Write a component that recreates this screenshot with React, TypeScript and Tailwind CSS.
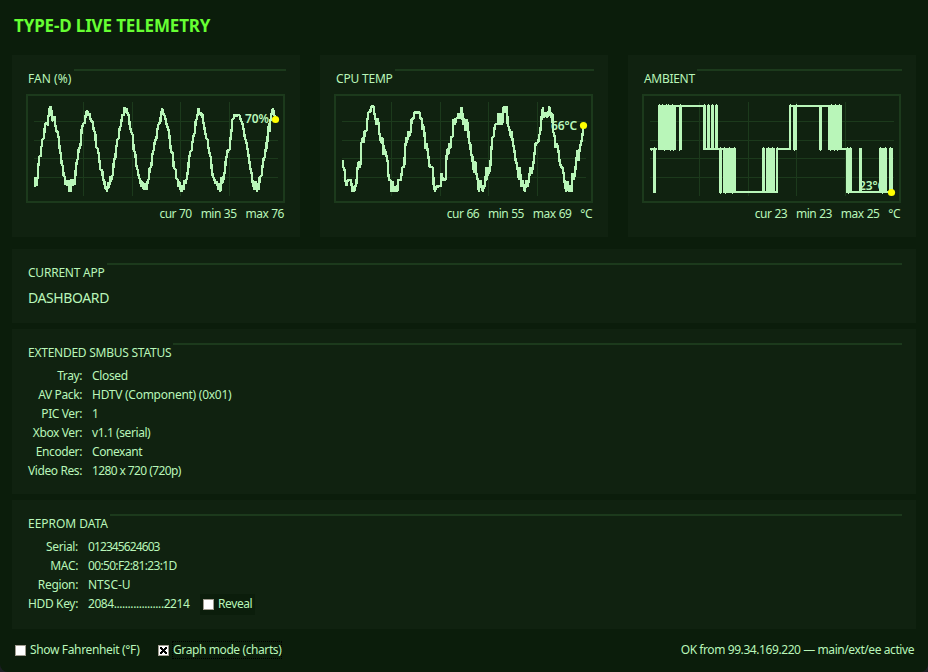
import type { ReactNode } from "react";

const LINE = "#b9f6b9";

const fanTrace =
  "44,292 44,264 48,264 48,288 50,270 54,260 54,230 57,200 62,198 62,172 66,165 66,148 70,145 72,130 74,104 79,98 83,108 84,78 88,76 88,54 92,50 94,70 96,94 102,78 104,100 108,122 112,126 116,150 118,175 122,195 124,222 128,228 130,258 134,260 134,285 138,270 142,288 146,270 148,305 150,285 152,305 154,268 158,286 162,268 164,284 166,240 170,210 173,206 175,178 180,170 182,150 184,118 188,102 194,98 197,64 202,64 204,78 208,70 212,94 216,92 220,118 225,130 227,170 233,176 237,208 240,238 246,242 248,268 252,272 254,295 258,290 260,305 264,275 266,295 270,258 272,275 277,255 279,235 281,208 285,205 287,180 291,150 295,145 298,115 302,105 306,72 310,78 312,52 316,68 320,55 322,72 326,76 328,105 332,125 338,135 340,180 345,190 348,225 352,240 356,262 360,268 362,290 366,275 368,298 372,280 376,298 379,298 382,275 386,265 388,235 393,230 396,195 400,180 404,150 408,148 411,120 416,98 420,98 422,70 426,56 430,75 434,78 438,100 442,112 446,125 450,165 452,185 458,190 460,230 466,240 468,265 472,270 474,290 478,275 480,298 484,305 486,285 490,300 492,270 496,282 500,262 504,235 506,205 510,185 514,180 516,160 520,135 524,128 526,95 530,85 532,72 535,55 538,75 542,68 546,72 548,90 552,110 554,125 558,145 562,148 564,170 568,190 572,205 574,235 578,262 582,265 584,280 590,275 594,298 598,280 600,305 604,262 608,280 611,250 614,248 616,215 620,195 622,182 628,178 630,150 634,120 636,90 640,85 642,72 646,78 652,76 658,76 662,92 666,98 670,118 674,145 678,155 682,180 686,205 690,235 694,250 698,285 702,298 706,275 710,305 714,280 716,300 718,262 724,255 726,235 730,205 734,200 738,155 740,178 742,140 746,100 748,125 750,95 754,70 758,55 762,75 766,88";

const cpuTrace =
  "40,214 45,214 45,232 49,240 51,270 55,288 58,270 68,270 70,288 72,305 76,290 78,305 80,288 84,286 86,250 88,232 92,214 95,232 98,214 99,160 104,142 107,160 109,124 115,122 117,92 120,68 126,66 128,50 136,50 138,68 141,86 145,104 148,86 152,106 152,124 156,142 158,160 162,142 165,160 166,195 170,178 174,196 178,214 180,250 182,270 188,272 188,305 193,272 195,305 198,288 201,305 205,290 207,305 209,270 218,270 220,250 222,232 228,230 230,178 234,142 236,160 240,124 242,140 248,122 250,86 256,86 258,68 274,68 276,86 280,86 282,120 284,104 288,124 292,178 295,160 300,196 304,230 314,232 316,285 320,305 324,290 338,288 340,250 344,270 352,268 354,214 356,178 360,195 362,160 366,178 368,142 373,140 376,86 380,105 384,86 390,84 390,68 394,86 398,68 400,50 402,68 404,104 408,86 412,122 416,86 420,122 422,158 426,160 428,195 432,196 434,232 438,248 441,214 444,250 448,268 450,290 452,305 456,270 460,290 464,305 466,290 470,288 474,232 476,270 480,232 482,250 486,230 488,196 492,142 496,140 500,104 508,102 510,68 514,104 518,68 522,104 524,50 528,68 532,50 536,52 538,100 544,122 548,142 550,124 554,160 558,180 562,212 564,214 568,240 572,270 574,232 578,268 580,290 584,270 586,290 590,305 594,270 598,290 602,268 606,232 610,250 614,232 618,195 622,160 630,156 632,140 636,124 640,80 644,50 646,84 652,68 656,84 660,68 664,50 668,84 672,68 674,122 680,142 682,174 686,160 690,178 694,214 698,232 702,230 706,250 710,285 714,305 718,272 722,305 726,285 730,305 732,250 736,270 740,252 744,210 748,180 750,214 754,178 758,160 762,140 766,106";

// [x, y, width, height] of every run of the ambient square wave.
const ambientRuns: number[][] = [
  [8, 54, 7, 2], [11, 54, 3, 45], [16, 11, 18, 45], [34, 11, 4, 2], [37, 11, 3, 45],
  [40, 11, 22, 2], [61, 11, 3, 45], [65, 11, 3, 45], [69, 11, 3, 45], [73, 11, 3, 45],
  [61, 54, 20, 2], [77, 54, 3, 45], [81, 54, 13, 45], [94, 97, 28, 2], [120, 54, 3, 45],
  [124, 54, 9, 45], [120, 97, 16, 2], [134, 54, 2, 45], [134, 54, 15, 2], [147, 11, 2, 45],
  [147, 11, 4, 2], [151, 11, 4, 45], [155, 11, 31, 2], [177, 11, 3, 45], [186, 11, 14, 45],
  [199, 54, 6, 2], [204, 54, 6, 45], [210, 97, 40, 2], [217, 54, 3, 45], [237, 54, 8, 45],
  [247, 54, 4, 45],
];
// Single pixels where the wave overshoots its level.
const ambientTicks: number[][] = [
  [9, 56], [12, 53], [17, 10], [20, 10], [24, 10], [26, 10], [30, 10], [22, 56], [28, 56],
  [31, 56], [38, 10], [37, 56], [62, 10], [66, 10], [70, 10], [74, 10], [78, 53], [82, 53],
  [87, 53], [92, 53], [83, 99], [90, 99], [78, 99], [121, 53], [126, 53], [130, 53],
  [135, 53], [148, 10], [152, 56], [154, 10], [178, 56], [189, 10], [193, 10], [197, 10],
  [188, 56], [192, 56], [195, 56], [205, 53], [208, 53], [206, 99], [238, 53], [243, 53],
  [240, 99], [248, 53],
];

function Panel({ title, titleClass, className, children }: {
  title: string; titleClass: string; className: string; children: ReactNode;
}) {
  return (
    <section className={`bg-[#102210] pl-4 pr-3.5 pt-3.5 ${className}`}>
      <div className="flex h-[18px]">
        <h2 className={`shrink-0 whitespace-nowrap pt-px text-[12px] leading-[18px] ${titleClass}`}>{title}</h2>
        <div className="h-0.5 flex-1 bg-[#1c3a1c]" />
      </div>
      {children}
    </section>
  );
}

function Chart({ label, labelClass, dot, stats, children }: {
  label: string; labelClass: string; dot: [number, number]; stats: string; children: ReactNode;
}) {
  return (
    <>
      <div className="relative -ml-0.5 mt-[7px] h-[109px] w-[259px]">
        <svg width="259" height="109" className="block" shapeRendering="crispEdges">
          <rect x="1" y="1" width="257" height="107" fill="none" stroke="#1c3a1c" strokeWidth="2" />
          {[27, 46, 64, 83].map((y) => <rect key={y} x="8" y={y} width="244" height="1" fill="#1c3a1c" />)}
          {[57, 106, 154, 203].map((x) => <rect key={x} x={x} y="8" width="1" height="94" fill="#1c3a1c" />)}
          {children}
        </svg>
        <span className={`absolute whitespace-nowrap text-[12px] font-semibold leading-4 ${labelClass}`}>{label}</span>
        <svg width="259" height="109" className="absolute inset-0">
          <circle cx={dot[0]} cy={dot[1]} r="3.6" fill="#ffff00" />
        </svg>
      </div>
      <div className="mr-0.5 mt-[3px] flex h-4 justify-end whitespace-pre text-[12px] leading-4 tracking-[-0.5px] [word-spacing:0.35px]">{stats}</div>
    </>
  );
}

function Trace({ points }: { points: string }) {
  return (
    <g transform="translate(-5.7 -4) scale(0.33333)">
      <polyline points={points} fill="none" stroke={LINE} strokeWidth="7" strokeLinejoin="bevel" />
    </g>
  );
}

function Box({ checked }: { checked?: boolean }) {
  return (
    <span className="block h-[11px] w-[11px] shrink-0 border border-[#a09c90] bg-white">
      {checked && (
        <svg width="9" height="9" viewBox="0 0 9 9" shapeRendering="crispEdges">
          <path d="M1 1h2v1h1v1h1V2h1V1h2v2H7v1H6v1h1v1h1v2H6V7H5V6H4v1H3v1H1V6h1V5h1V4H2V3H1z" fill="#000" />
        </svg>
      )}
    </span>
  );
}

function Rows({ rows, labelClass }: { rows: [string, ReactNode][]; labelClass: string }) {
  return (
    <dl className="mt-[5px]">
      {rows.map(([k, v]) => (
        <div key={k} className="flex h-[19px] items-center gap-2.5 whitespace-nowrap text-[12px] leading-[19px] last:h-5 last:leading-5">
          <dt className={`flex shrink-0 justify-end ${labelClass}`}>{k}</dt>
          <dd>{v}</dd>
        </div>
      ))}
    </dl>
  );
}

export default function App() {
  return (
    <div className="h-[672px] w-[928px] bg-[#1c1f24]">
      <main className="flex h-full flex-col rounded-b-lg bg-[#0b1d0b] px-3 font-['Noto_Sans','Open_Sans',sans-serif] text-[#b9f6b9]">
        <h1 className="ml-0.5 mt-[14px] h-[41px] text-[17px] font-bold leading-6 tracking-[-0.15px] text-[#66ff33]">TYPE-D LIVE TELEMETRY</h1>
        <div className="flex gap-5">
          <Panel title="FAN (%)" titleClass="w-[46px] tracking-[0.05px]" className="h-[182px] w-72">
            <Chart label="70%" labelClass="left-[219px] top-[17px] tracking-[-0.1px]" dot={[249.5, 25.5]} stats="cur 70   min 35   max 76">
              <Trace points={fanTrace} />
            </Chart>
          </Panel>
          <Panel title="CPU TEMP" titleClass="w-[59px] tracking-[-0.2px]" className="h-[182px] w-72">
            <Chart label="66°C" labelClass="left-[217px] top-[24px] tracking-[-0.1px]" dot={[249.5, 31.5]} stats="cur 66   min 55   max 69   °C">
              <Trace points={cpuTrace} />
            </Chart>
          </Panel>
          <Panel title="AMBIENT" titleClass="w-[53px] tracking-[-0.3px]" className="h-[182px] w-72">
            <Chart label="23°C" labelClass="left-[217px] top-[84px] tracking-[-0.1px]" dot={[249.5, 98.5]} stats="cur 23   min 23   max 25   °C">
              {ambientRuns.map(([x, y, w, h], i) => <rect key={i} x={x} y={y} width={w} height={h} fill={LINE} />)}
              {ambientTicks.map(([x, y]) => <rect key={`${x}-${y}`} x={x} y={y} width="1" height="1" fill={LINE} />)}
            </Chart>
          </Panel>
        </div>
        <Panel title="CURRENT APP" titleClass="w-[79px] tracking-[-0.22px]" className="mt-3 h-[74px]">
          <p className="mt-[7px] text-[14px] leading-5 tracking-[-0.4px]">DASHBOARD</p>
        </Panel>
        <Panel title="EXTENDED SMBUS STATUS" titleClass="w-[145px] tracking-[-0.25px]" className="mt-1.5 h-[165px]">
          <Rows labelClass="w-[54px] tracking-[-0.4px]" rows={[
            ["Tray:", <span className="tracking-[-0.35px]">Closed</span>],
            ["AV Pack:", <span className="tracking-[-0.26px]">HDTV (Component) (0x01)</span>],
            ["PIC Ver:", "1"],
            ["Xbox Ver:", <span className="tracking-[-0.42px]">v1.1 (serial)</span>],
            ["Encoder:", <span className="tracking-[-0.45px]">Conexant</span>],
            ["Video Res:", <span className="tracking-[-0.6px]">1280 x 720 (720p)</span>],
          ]} />
        </Panel>
        <Panel title="EEPROM DATA" titleClass="w-[82px] tracking-[-0.03px]" className="mt-1.5 h-[129px]">
          <Rows labelClass="w-[50px] tracking-[-0.35px]" rows={[
            ["Serial:", <span className="tracking-[-0.9px]">012345624603</span>],
            ["MAC:", <span className="tracking-[-0.66px]">00:50:F2:81:23:1D</span>],
            ["Region:", <span>NTSC-U</span>],
            ["HDD Key:", (
              <div className="flex h-[21px] items-center">
                <span className="w-[102px] tracking-[-0.44px]">2084..................2214</span>
                <label className="ml-2.5 flex h-[21px] w-[55px] items-center gap-1 bg-[#0b1d0b] pl-[3px]">
                  <Box /><span className="tracking-[-0.4px]">Reveal</span>
                </label>
              </div>
            )],
          ]} />
        </Panel>
        <footer className="mt-[13px] flex h-4 items-center whitespace-nowrap pl-[3px] pr-0.5 text-[12px] leading-4">
          <label className="flex w-[143px] items-center gap-1"><Box /><span className="tracking-[-0.35px]">Show Fahrenheit (°F)</span></label>
          <label className="flex items-center gap-[3px]"><Box checked /><span className="border border-dotted border-black tracking-[-0.4px]">Graph mode (charts)</span></label>
          <span className="ml-auto tracking-[-0.42px]">OK from 99.34.169.220 — main/ext/ee active</span>
        </footer>
      </main>
    </div>
  );
}
